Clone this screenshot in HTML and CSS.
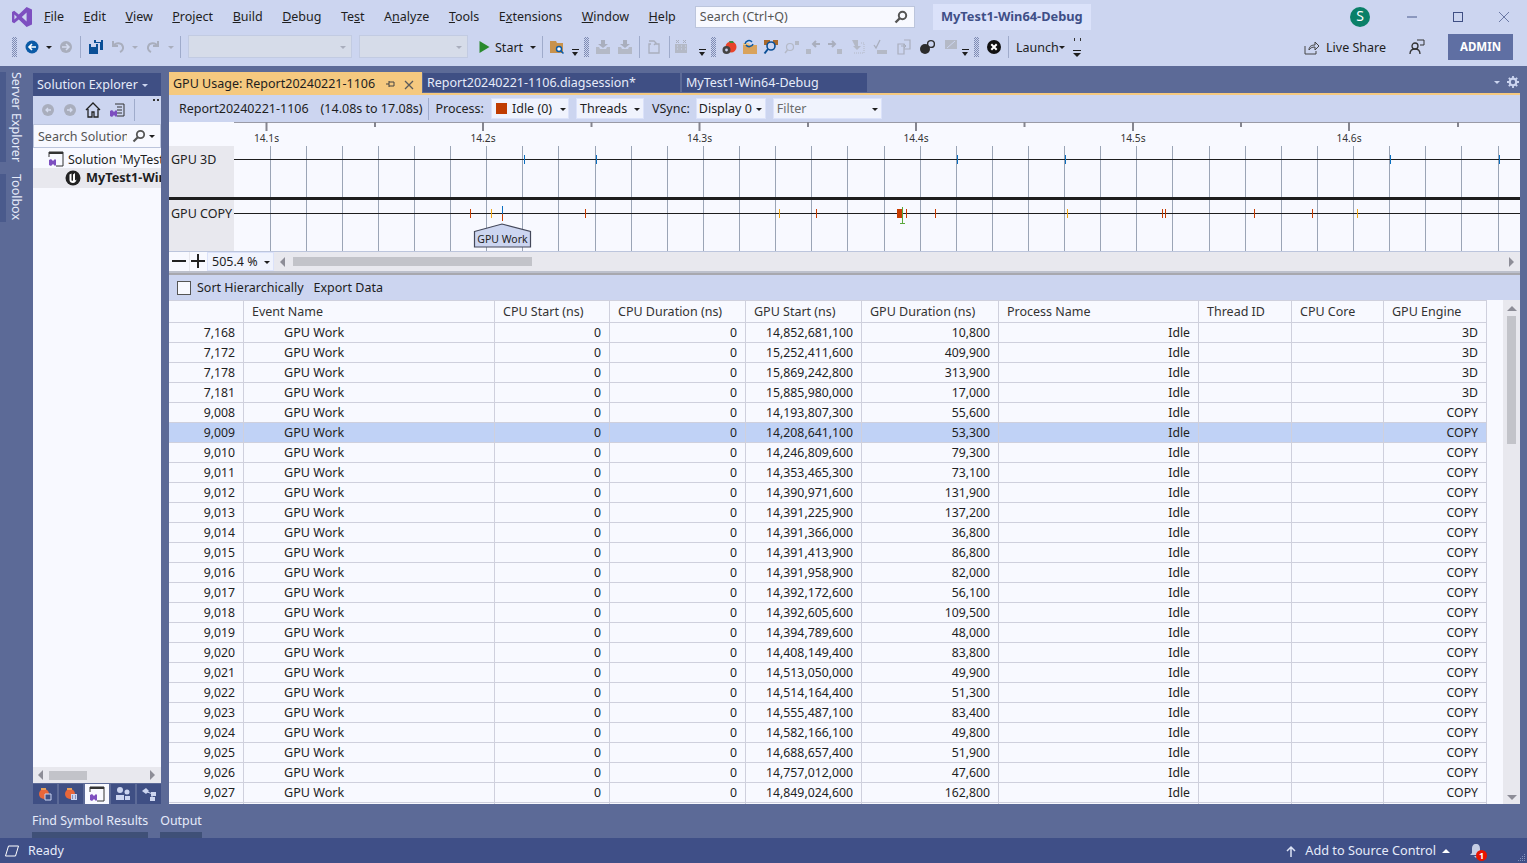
FILE: index.html
```html
<!DOCTYPE html>
<html lang="en">
<head>
<meta charset="utf-8">
<title>GPU Usage</title>
<link rel="stylesheet" href="styles.css">
</head>
<body>
<div class="app">
<header class="chrome">
  <div class="menubar">
    <svg class="logo" viewBox="0 0 22 22"><path fill="#7d4fc0" d="M15.6 1 21 3.4v15.2L15.6 21 7.8 13.6 3.2 17.2 1 16V6l2.2-1.2 4.6 3.6zM15.6 6.6 10.8 11l4.8 4.4zM3.4 8.4v5.2L6 11z"/></svg>
    <nav class="menu">
      <span><u>F</u>ile</span><span><u>E</u>dit</span><span><u>V</u>iew</span><span><u>P</u>roject</span><span><u>B</u>uild</span><span><u>D</u>ebug</span><span>Te<u>s</u>t</span><span>A<u>n</u>alyze</span><span><u>T</u>ools</span><span>E<u>x</u>tensions</span><span><u>W</u>indow</span><span><u>H</u>elp</span>
    </nav>
    <div class="quick"><span>Search (Ctrl+Q)</span>
      <svg class="i14" viewBox="0 0 14 14"><circle cx="8.5" cy="5.5" r="3.7" fill="none" stroke="#555" stroke-width="2"/><path d="M6 8 1.5 12.5" stroke="#555" stroke-width="2.4"/></svg>
    </div>
    <div class="solname">MyTest1-Win64-Debug</div>
    <div class="winctl">
      <span class="avatar">S</span>
      <svg class="wbtn" viewBox="0 0 12 12"><path d="M1 6h10" stroke="#4a5a8c"/></svg>
      <svg class="wbtn" viewBox="0 0 12 12"><rect x="1.5" y="1.5" width="9" height="9" fill="none" stroke="#3f4f84"/></svg>
      <svg class="wbtn" viewBox="0 0 12 12"><path d="M1 1l10 10M11 1 1 11" stroke="#6a78a4"/></svg>
    </div>
  </div>
  <div class="toolbar">
    <i class="grip g1"></i>
    <span class="ic m4"><svg class="i16" viewBox="0 0 16 16"><circle cx="8" cy="8" r="6.5" fill="#0a5aa6"/><path d="M12 8H6M8 5 5 8l3 3" stroke="#fff" stroke-width="1.6" fill="none"/></svg></span>
    <i class="caret"></i>
    <span class="ic"><svg class="i16" viewBox="0 0 16 16"><circle cx="8" cy="8" r="6" fill="#a9aebd"/><path d="M4 8h6M8 5l3 3-3 3" stroke="#d5dcf0" stroke-width="1.5" fill="none"/></svg></span>
    <i class="sep m3"></i>
    <span class="ic m4"><svg class="i16" viewBox="0 0 16 16"><path fill="#0a4f96" d="M1 5h9v10H1zM6 1h9v10h-3V4H6z"/><path fill="#ccd5f0" d="M3 5h5v3H3zM8 1h5v2H8z"/></svg></span>
    <span class="ic"><svg class="i16" viewBox="0 0 16 16"><path d="M3 2v5h5M3.5 7C6 3 12 3.500 13 8c.4 2.500-1 4-3 5" stroke="#a9aebd" stroke-width="2" fill="none"/></svg></span>
    <i class="caret off"></i>
    <span class="ic w24"><svg class="i16" viewBox="0 0 16 16"><path d="M13 2v5H8M12.500 7C10 3 4 3.500 3 8c-.4 2.500 1 4 3 5" stroke="#a9aebd" stroke-width="2" fill="none"/></svg></span>
    <i class="caret off"></i>
    <i class="sep m3"></i>
    <span class="combo c1"><i class="caret off"></i></span>
    <span class="combo c2"><i class="caret off"></i></span>
    <span class="ic m5"><svg class="i14" viewBox="0 0 14 14"><path fill="#2a8a2e" d="M2.500 1 12.500 7l-10 6z"/></svg></span>
    <span class="tbtext">Start</span>
    <i class="caret m3"></i>
    <i class="sep m3"></i>
    <span class="ic m3"><svg class="i16" viewBox="0 0 16 16"><path fill="#c8924c" d="M1 2h6l1 2h6v10H1z"/><circle cx="10" cy="10" r="2.500" fill="#fff" stroke="#0a5aa6" stroke-width="1.400"/><path d="M12 12l2.500 2.500" stroke="#0a5aa6" stroke-width="1.500"/></svg></span>
    <i class="drop m3"></i><i class="grip m3"></i>
    <span class="ic m3"><svg class="i16" viewBox="0 0 16 16"><use href="#dim-down"/></svg></span>
    <span class="ic"><svg class="i16" viewBox="0 0 16 16"><use href="#dim-down"/></svg></span>
    <i class="sep m3"></i>
    <span class="ic m3"><svg class="i16" viewBox="0 0 16 16"><path d="M5 5H3v9h10V5h-4M3 2h5l2 2-2 2" stroke="#a9aebd" stroke-width="1.300" fill="none"/></svg></span>
    <i class="sep m4"></i>
    <span class="ic"><svg class="i16" viewBox="0 0 16 16"><path d="M2 5h12v9H2z" fill="#b4b9c6"/><path d="M3 1l3 3M6 1 3 4M10 1l3 3M13 1l-3 3" stroke="#a9aebd"/><path d="M4 7h1M8 7h1M12 7h1M4 10h1M8 10h1M12 10h1" stroke="#ccd5f0"/></svg></span>
    <i class="drop m6"></i><i class="grip m3"></i>
    <span class="ic n m2"><svg class="i16" viewBox="0 0 16 16"><circle cx="10" cy="8" r="5.500" fill="#e8442a"/><path d="M8 2h4l1 2-4 0z" fill="#3a8a3a"/><circle cx="5.500" cy="11" r="4" fill="#444"/><circle cx="5.500" cy="11" r="1.400" fill="#ccd5f0"/></svg></span>
    <span class="ic n"><svg class="i16" viewBox="0 0 16 16"><path fill="#d9a35c" d="M1 6h14v9H1z"/><path fill="#e9c58c" d="M1 4h6l1 2H1z"/><path d="M3 5a4 4 0 0 1 7-2M11 5a4 4 0 0 1-7 1" stroke="#0a5aa6" stroke-width="1.500" fill="none"/></svg></span>
    <span class="ic n"><svg class="i16" viewBox="0 0 16 16"><path fill="#a8682a" d="M1 1h6v5H1zM10 1h5v5h-5z"/><circle cx="8" cy="7" r="4" fill="#ccd5f0" stroke="#0a4f96" stroke-width="1.600"/><path d="M5 10 1.500 14.500" stroke="#0a4f96" stroke-width="2"/></svg></span>
    <span class="ic n"><svg class="i16" viewBox="0 0 16 16"><circle cx="6" cy="8" r="3.500" fill="none" stroke="#b4b9c6" stroke-width="1.200"/><path d="M3.500 11 1 14" stroke="#b4b9c6" stroke-width="1.400"/><path d="M11 2h4v4h-4z" fill="#b4b9c6"/></svg></span>
    <span class="ic n"><svg class="i16" viewBox="0 0 16 16"><path d="M1 10h5v5H1z" fill="#b4b9c6"/><path d="M15 5H8M11 2 8 5l3 3" stroke="#a9aebd" stroke-width="2" fill="none"/></svg></span>
    <span class="ic t"><svg class="i16" viewBox="0 0 16 16"><path d="M10 10h5v5h-5z" fill="#b4b9c6"/><path d="M1 5h7M5 2l3 3-3 3" stroke="#a9aebd" stroke-width="2" fill="none"/></svg></span>
    <span class="ic t"><svg class="i16" viewBox="0 0 16 16"><path d="M2 1h6v6h3l-4 4-4-4h2z" fill="#b4b9c6"/><path d="M11 4h3v10H4" stroke="#b4b9c6" stroke-dasharray="1 1" fill="none"/></svg></span>
    <span class="ic t"><svg class="i16" viewBox="0 0 16 16"><path d="M1 6l2 3 4-8" stroke="#a9aebd" stroke-width="1.300" fill="none"/><path d="M4 11h10v4H4z" fill="#b4b9c6"/></svg></span>
    <span class="ic t"><svg class="i16" viewBox="0 0 16 16"><path d="M2 5h6v10H2zM8 1h6v9H8" stroke="#a9aebd" stroke-width="1.200" fill="none"/><path d="M5 7h5M8 5l2 2-2 2" stroke="#a9aebd" fill="none"/></svg></span>
    <span class="ic t"><svg class="i16" viewBox="0 0 16 16"><circle cx="6" cy="10" r="5" fill="#2c2c2c"/><circle cx="12" cy="5" r="3.400" fill="none" stroke="#2c2c2c" stroke-width="1.400"/></svg></span>
    <span class="ic t"><svg class="i16" viewBox="0 0 16 16"><path d="M3 1h12v9H3z" fill="#b4b9c6"/><path d="M5 9l8-7M1 13h14M5 11l3 4" stroke="#ccd5f0"/></svg></span>
    <i class="drop"></i><i class="grip m3"></i>
    <span class="ic m4"><svg class="i16" viewBox="0 0 16 16"><circle cx="8" cy="8" r="7" fill="#111"/><path d="M5.300 5.300l5.400 5.400M10.700 5.300l-5.400 5.400" stroke="#fff" stroke-width="2"/></svg></span>
    <i class="sep m3"></i>
    <span class="tbtext launch">Launch</span>
    <i class="caret s"></i>
    <span class="over"><i></i></span>
    <div class="share">
      <svg class="i16" viewBox="0 0 16 16"><path d="M1 7v8h11v-3" stroke="#444" fill="none"/><path d="M5 11c0-4 3-5 6-5V3l4 4-4 4V8C8 8 6 9 5 11z" stroke="#444" fill="none"/></svg>
      <span class="sharetxt">Live Share</span>
      <svg class="i16 fb" viewBox="0 0 16 16"><circle cx="6" cy="7" r="3" fill="none" stroke="#333" stroke-width="1.300"/><path d="M1 15c0-3 2-5 5-5s5 2 5 5" stroke="#333" stroke-width="1.300" fill="none"/><path d="M8 1h7v5h-4" stroke="#333" fill="none"/></svg>
      <span class="admin">ADMIN</span>
    </div>
  </div>
</header>

<main class="main">
  <aside class="rail">
    <div class="railitem r1"><b></b><span>Server Explorer</span></div>
    <div class="railitem r2"><b></b><span>Toolbox</span></div>
  </aside>

  <section class="explorer">
    <div class="ex-head">Solution Explorer <i class="caret pale"></i></div>
    <div class="ex-tools">
      <svg class="i14" viewBox="0 0 14 14"><circle cx="7" cy="7" r="6" fill="#a9aebd"/><path d="M10 7H5M7 5 5 7l2 2" stroke="#d5dcf0" stroke-width="1.300" fill="none"/></svg>
      <svg class="i14" viewBox="0 0 14 14"><circle cx="7" cy="7" r="6" fill="#a9aebd"/><path d="M4 7h5M7 5l2 2-2 2" stroke="#d5dcf0" stroke-width="1.300" fill="none"/></svg>
      <svg class="i16" viewBox="0 0 16 16"><path d="M1 8l7-7 7 7M3 7v8h4v-5h2v5h4V7" stroke="#222" stroke-width="1.300" fill="none"/></svg>
      <svg class="i16" viewBox="0 0 16 16"><path d="M6 2h9v12H8" stroke="#333" fill="none"/><path d="M8 5h5M8 8h5M8 11h5" stroke="#333"/><path d="M1 9l2-1 2 2 2-2 1 1v5l-1 1-2-2-2 2-2-1z" fill="#7d4fc0"/></svg>
      <i class="sep"></i>
      <span class="ex-over"></span>
    </div>
    <div class="ex-search"><span>Search Solution</span>
      <svg class="i14" viewBox="0 0 14 14"><circle cx="8.500" cy="5.500" r="3.700" fill="none" stroke="#555" stroke-width="1.800"/><path d="M6 8 1.500 12.500" stroke="#555" stroke-width="2.200"/></svg>
      <i class="caret"></i>
    </div>
    <div class="ex-tree">
      <div class="tree-row sol">
        <svg class="i16" viewBox="0 0 16 16"><path d="M1 6V1h14v14H8" stroke="#333" fill="none"/><path d="M1 2h14" stroke="#333" stroke-width="2"/><path d="M1 9l2-1 2 2 2-2 1 1v5l-1 1-2-2-2 2-2-1z" fill="#7d4fc0"/></svg>
        <span>Solution 'MyTest1-Win64-Debug'</span>
      </div>
      <div class="tree-row proj">
        <svg class="i16" viewBox="0 0 16 16"><circle cx="8" cy="8" r="7.500" fill="#222"/><path d="M4.500 4.500 6.500 3.500V10c0 1 1 1 1.500.5V4.500L10 3v7.500l1.500-1C11 11.500 10 13 8 13c-2 0-3.500-1-3.500-3z" fill="#fff"/></svg>
        <span>MyTest1-Win64-Debug</span>
      </div>
    </div>
    <div class="ex-hscroll"><i class="ar l"></i><b></b><i class="ar r"></i></div>
    <div class="ex-tabs">
      <span><svg class="i14" viewBox="0 0 14 14"><circle cx="6" cy="7" r="5" fill="#e8663a"/><path d="M3 1h5v2H3z" fill="#e8a05a"/><path d="M7 7h6v6H7z" fill="#3f4f84" stroke="#ccd5f0"/></svg></span>
      <span><svg class="i14" viewBox="0 0 14 14"><circle cx="6" cy="7" r="5" fill="#e8663a"/><path d="M3 1h5v2H3z" fill="#e8a05a"/><path d="M7 7h6v6H7z" fill="#ccd5f0"/><path d="M8 9h1M11 9h1M8 11h1M11 11h1" stroke="#3f4f84"/></svg></span>
      <span class="on"><svg class="i16" viewBox="0 0 16 16"><path d="M1 6V1h14v14H8" stroke="#333" fill="none"/><path d="M1 2h14" stroke="#333" stroke-width="2"/><path d="M1 9l2-1 2 2 2-2 1 1v5l-1 1-2-2-2 2-2-1z" fill="#7d4fc0"/></svg></span>
      <span><svg class="i16" viewBox="0 0 16 16"><circle cx="5" cy="4" r="3" fill="#ccd5f0"/><circle cx="12" cy="6" r="2.500" fill="#ccd5f0"/><path d="M1 14V9h8v5zM10 14v-4h5v4z" fill="#ccd5f0"/></svg></span>
      <span><svg class="i16" viewBox="0 0 16 16"><path d="M1 5l4-3 3 3-3 3z" fill="#ccd5f0"/><path d="M6 6l6 2M11 8v4" stroke="#ccd5f0"/><path d="M10 6h5v4h-5zM9 11h5v4H9z" fill="#ccd5f0"/></svg></span>
    </div>
  </section>

  <section class="doc">
    <div class="tabs">
      <div class="tab active"><span>GPU Usage: Report20240221-1106</span>
        <svg class="pin" viewBox="0 0 10 10"><path d="M0 5h3M3 2v6M3 3h5v4H3" stroke="#444" fill="none"/></svg>
        <svg class="close" viewBox="0 0 10 10"><path d="M1 1l8 8M9 1 1 9" stroke="#5a5a5a" stroke-width="1.300"/></svg>
      </div>
      <div class="tab t2">Report20240221-1106.diagsession*</div>
      <div class="tab t3">MyTest1-Win64-Debug</div>
      <div class="tab-tools"><i class="caret pale"></i>
        <svg class="i12" viewBox="0 0 12 12"><circle cx="6" cy="6" r="3.300" fill="none" stroke="#ccd5f0" stroke-width="2.200"/><path d="M6 0v2.500M6 9.500V12M0 6h2.500M9.500 6H12M1.800 1.800l1.700 1.700M8.500 8.500l1.700 1.700M10.200 1.800 8.500 3.500M3.500 8.500l-1.700 1.700" stroke="#ccd5f0" stroke-width="1.800"/></svg>
      </div>
    </div>
    <div class="doc-bar">
      <span class="rpt">Report20240221-1106</span>
      <span class="range">(14.08s to 17.08s)</span>
      <i class="sep"></i>
      <span class="lbl">Process:</span>
      <span class="pick p-proc"><b class="swatch"></b><span>Idle (0)</span><i class="caret"></i></span>
      <span class="pick p-thr"><span>Threads</span><i class="caret"></i></span>
      <span class="lbl vs">VSync:</span>
      <span class="pick p-dis"><span>Display 0</span><i class="caret"></i></span>
      <span class="pick p-fil"><span>Filter</span><i class="caret"></i></span>
    </div>

    <svg class="graph" viewBox="169 122 1351 129" width="1351" height="129">
      <rect x="169" y="122" width="1351" height="129" fill="#f8f9ff"/>
      <rect x="169" y="146" width="65" height="105" fill="#e8e8ee"/>
      <path d="M234 122.500H1520" stroke="#9a9aa6"/>
      <path d="M266.500 122v9M483 122v9M699.500 122v9M916 122v9M1133 122v9M1349 122v9" stroke="#85858f" stroke-width="2"/>
      <path d="M375 122v5M591.500 122v5M808 122v5M1024.500 122v5M1241 122v5M1458 122v5" stroke="#85858f" stroke-width="2"/>
      <g class="tick">
        <text x="266.500" y="142">14.1s</text><text x="483" y="142">14.2s</text><text x="699.500" y="142">14.3s</text><text x="916" y="142">14.4s</text><text x="1133" y="142">14.5s</text><text x="1349" y="142">14.6s</text>
      </g>
      <path stroke="#9ba5b6" d="M270.500 146V251M306.500 146V251M342.500 146V251M378.500 146V251M414.500 146V251M450.500 146V251M486.500 146V251M522.500 146V251M558.500 146V251M595.500 146V251M631.500 146V251M667.500 146V251M703.500 146V251M739.500 146V251M775.500 146V251M811.500 146V251M847.500 146V251M884.500 146V251M920.500 146V251M956.500 146V251M992.500 146V251M1028.500 146V251M1064.500 146V251M1100.500 146V251M1136.500 146V251M1172.500 146V251M1209.500 146V251M1245.500 146V251M1281.500 146V251M1317.500 146V251M1353.500 146V251M1389.500 146V251M1425.500 146V251M1461.500 146V251M1498.500 146V251"/>
      <path d="M234 159.500H1520M234 213.500H1520" stroke="#1e1e1e"/>
      <rect x="169" y="197" width="1351" height="3" fill="#1e1e1e"/>
      <path stroke="#0a6fc0" d="M524.500 155v9M596.500 155v9M957.500 155v9M1065.500 155v9M1390.500 155v9M1499.500 155v9"/>
      <path stroke="#c83c00" d="M470.500 209v9M585.500 209v9M816.500 209v9M906.500 209v9M935.500 209v9M1162.500 209v9M1165.500 209v9M1254.500 209v9M1312.500 209v9"/>
      <path stroke="#f0a818" d="M491.500 209v9M779.500 209v9M1067.500 209v9M1357.500 209v9"/>
      <path stroke="#0a6fc0" d="M502.500 206v8"/><path stroke="#c83c00" d="M502.500 214v7"/>
      <rect x="897" y="209" width="5" height="9" fill="#c83c00"/>
      <path stroke="#5aa83c" d="M902.500 207v16M900 223.500h5"/>
      <path d="M474.500 231.500 502 224l28.500 7.500v15.500h-56z" fill="#ccd5f0" stroke="#44485a" stroke-width="1.200"/>
      <text class="gw" x="502.500" y="243">GPU Work</text>
      <text class="lane" x="171" y="164">GPU 3D</text>
      <text class="lane" x="171" y="218">GPU COPY</text>
    </svg>

    <div class="zoombar">
      <span class="zb minus"><i></i></span>
      <span class="zb plus"><i></i><i></i></span>
      <span class="zsel"><span>505.4 %</span><i class="caret"></i></span>
      <div class="hs"><i class="ar l"></i><b></b><i class="ar r"></i></div>
    </div>
    <div class="split"></div>
    <div class="sortrow">
      <i class="chk"></i><span>Sort Hierarchically</span><span class="exp">Export Data</span>
    </div>
    <div class="gridwrap">
      <div class="gridclip">
      <table class="grid">
        <colgroup><col class="k0"><col class="k1"><col class="k2"><col class="k3"><col class="k4"><col class="k5"><col class="k6"><col class="k7"><col class="k8"><col class="k9"></colgroup>
        <thead><tr><th></th><th>Event Name</th><th>CPU Start (ns)</th><th>CPU Duration (ns)</th><th>GPU Start (ns)</th><th>GPU Duration (ns)</th><th>Process Name</th><th>Thread ID</th><th>CPU Core</th><th>GPU Engine</th></tr></thead>
        <tbody>
<tr><td>7,168</td><td class="ev">GPU Work</td><td>0</td><td>0</td><td>14,852,681,100</td><td>10,800</td><td>Idle</td><td></td><td></td><td>3D</td></tr>
<tr><td>7,172</td><td class="ev">GPU Work</td><td>0</td><td>0</td><td>15,252,411,600</td><td>409,900</td><td>Idle</td><td></td><td></td><td>3D</td></tr>
<tr><td>7,178</td><td class="ev">GPU Work</td><td>0</td><td>0</td><td>15,869,242,800</td><td>313,900</td><td>Idle</td><td></td><td></td><td>3D</td></tr>
<tr><td>7,181</td><td class="ev">GPU Work</td><td>0</td><td>0</td><td>15,885,980,000</td><td>17,000</td><td>Idle</td><td></td><td></td><td>3D</td></tr>
<tr><td>9,008</td><td class="ev">GPU Work</td><td>0</td><td>0</td><td>14,193,807,300</td><td>55,600</td><td>Idle</td><td></td><td></td><td>COPY</td></tr>
<tr class="sel"><td>9,009</td><td class="ev">GPU Work</td><td>0</td><td>0</td><td>14,208,641,100</td><td>53,300</td><td>Idle</td><td></td><td></td><td>COPY</td></tr>
<tr><td>9,010</td><td class="ev">GPU Work</td><td>0</td><td>0</td><td>14,246,809,600</td><td>79,300</td><td>Idle</td><td></td><td></td><td>COPY</td></tr>
<tr><td>9,011</td><td class="ev">GPU Work</td><td>0</td><td>0</td><td>14,353,465,300</td><td>73,100</td><td>Idle</td><td></td><td></td><td>COPY</td></tr>
<tr><td>9,012</td><td class="ev">GPU Work</td><td>0</td><td>0</td><td>14,390,971,600</td><td>131,900</td><td>Idle</td><td></td><td></td><td>COPY</td></tr>
<tr><td>9,013</td><td class="ev">GPU Work</td><td>0</td><td>0</td><td>14,391,225,900</td><td>137,200</td><td>Idle</td><td></td><td></td><td>COPY</td></tr>
<tr><td>9,014</td><td class="ev">GPU Work</td><td>0</td><td>0</td><td>14,391,366,000</td><td>36,800</td><td>Idle</td><td></td><td></td><td>COPY</td></tr>
<tr><td>9,015</td><td class="ev">GPU Work</td><td>0</td><td>0</td><td>14,391,413,900</td><td>86,800</td><td>Idle</td><td></td><td></td><td>COPY</td></tr>
<tr><td>9,016</td><td class="ev">GPU Work</td><td>0</td><td>0</td><td>14,391,958,900</td><td>82,000</td><td>Idle</td><td></td><td></td><td>COPY</td></tr>
<tr><td>9,017</td><td class="ev">GPU Work</td><td>0</td><td>0</td><td>14,392,172,600</td><td>56,100</td><td>Idle</td><td></td><td></td><td>COPY</td></tr>
<tr><td>9,018</td><td class="ev">GPU Work</td><td>0</td><td>0</td><td>14,392,605,600</td><td>109,500</td><td>Idle</td><td></td><td></td><td>COPY</td></tr>
<tr><td>9,019</td><td class="ev">GPU Work</td><td>0</td><td>0</td><td>14,394,789,600</td><td>48,000</td><td>Idle</td><td></td><td></td><td>COPY</td></tr>
<tr><td>9,020</td><td class="ev">GPU Work</td><td>0</td><td>0</td><td>14,408,149,400</td><td>83,800</td><td>Idle</td><td></td><td></td><td>COPY</td></tr>
<tr><td>9,021</td><td class="ev">GPU Work</td><td>0</td><td>0</td><td>14,513,050,000</td><td>49,900</td><td>Idle</td><td></td><td></td><td>COPY</td></tr>
<tr><td>9,022</td><td class="ev">GPU Work</td><td>0</td><td>0</td><td>14,514,164,400</td><td>51,300</td><td>Idle</td><td></td><td></td><td>COPY</td></tr>
<tr><td>9,023</td><td class="ev">GPU Work</td><td>0</td><td>0</td><td>14,555,487,100</td><td>83,400</td><td>Idle</td><td></td><td></td><td>COPY</td></tr>
<tr><td>9,024</td><td class="ev">GPU Work</td><td>0</td><td>0</td><td>14,582,166,100</td><td>49,800</td><td>Idle</td><td></td><td></td><td>COPY</td></tr>
<tr><td>9,025</td><td class="ev">GPU Work</td><td>0</td><td>0</td><td>14,688,657,400</td><td>51,900</td><td>Idle</td><td></td><td></td><td>COPY</td></tr>
<tr><td>9,026</td><td class="ev">GPU Work</td><td>0</td><td>0</td><td>14,757,012,000</td><td>47,600</td><td>Idle</td><td></td><td></td><td>COPY</td></tr>
<tr><td>9,027</td><td class="ev">GPU Work</td><td>0</td><td>0</td><td>14,849,024,600</td><td>162,800</td><td>Idle</td><td></td><td></td><td>COPY</td></tr>
<tr><td></td><td></td><td></td><td></td><td></td><td></td><td></td><td></td><td></td><td></td></tr>
        </tbody>
      </table>
      </div>
      <div class="gap"></div>
      <div class="vs-bar"><i class="ar u"></i><b></b><i class="ar d"></i></div>
    </div>
  </section>
</main>

<div class="dock"><span>Find Symbol Results</span><span>Output</span></div>
<footer class="status">
  <svg class="i16" viewBox="0 0 16 16"><path d="M4.500 3h10l-3 10h-10z" fill="none" stroke="#fff"/></svg>
  <span class="ready">Ready</span>
  <div class="st-right">
    <svg class="i12" viewBox="0 0 12 12"><path d="M6 12V2M2 6l4-4 4 4" stroke="#dde3f5" stroke-width="1.500" fill="none"/></svg>
    <span class="scm">Add to Source Control</span>
    <i class="caret up"></i>
    <span class="bell"><svg class="i16" viewBox="0 0 16 16"><path d="M8 1c3 0 4 2 4 5v4l2 2H2l2-2V6c0-3 1-5 4-5zM6 13h4l-2 2z" fill="#c5cde4"/></svg><b>1</b></span>
  </div>
  <svg class="corner" viewBox="0 0 8 8"><path d="M6 0h1v1H6zM4 2h1v1H4zM6 2h1v1H6zM2 4h1v1H2zM4 4h1v1H4zM6 4h1v1H6zM0 6h1v1H0zM2 6h1v1H2zM4 6h1v1H4zM6 6h1v1H6z" fill="#8593bd"/></svg>
</footer>
</div>
<svg class="defs" width="0" height="0"><symbol id="dim-down" viewBox="0 0 16 16"><path d="M6 1h4v4h3l-5 4-5-4h3z" fill="#a9aebd"/><path d="M1 8h3l1 2h6l1-2h3v7H1z" fill="#b4b9c6"/></symbol></svg>
</body>
</html>
```

FILE: styles.css
```css
* { box-sizing: border-box; }
html, body { margin: 0; padding: 0; height: 100%; overflow: hidden; }
body { font: 12.5px/1.2 "Noto Sans", "Open Sans", sans-serif; color: #1e1e1e; }
i, b { display: block; font-style: normal; }
svg { display: block; flex: none; }
.defs { position: absolute; }
.i12 { width: 12px; height: 12px; }
.i14 { width: 14px; height: 14px; }
.i16 { width: 16px; height: 16px; }

.app { width: 1527px; height: 863px; display: flex; flex-direction: column; background: #5c6a97; }
.chrome { background: #ccd5f0; height: 66px; flex: none; }

.menubar { height: 33px; display: flex; align-items: center; position: relative; }
.logo { width: 22px; height: 22px; margin-left: 11px; }
.menu { display: flex; gap: 19.5px; margin-left: 11px; }
.quick { margin-left: 19px; width: 220px; height: 22px; background: #f8f9ff; border: 1px solid #bcc5dc; display: flex; align-items: center; justify-content: space-between; padding: 0 6px 0 4px; color: #555; }
.solname { margin-left: 18px; width: 158px; height: 26px; background: #dbe2fa; color: #3f4f87; font-weight: 700; display: flex; align-items: center; justify-content: center; font-size: 12.8px; }
.winctl { margin-left: auto; display: flex; align-items: center; padding-right: 17px; }
.avatar { width: 20px; height: 20px; border-radius: 50%; background: #0a8068; color: #fff; display: flex; align-items: center; justify-content: center; font-size: 14px; }
.wbtn { width: 12px; height: 12px; margin-left: 34px; }
.avatar + .wbtn { margin-left: 36px; }

.toolbar { height: 27px; display: flex; align-items: center; padding-left: 12px; }
.grip { width: 5px; height: 20px; background-image: conic-gradient(#7e8bb3 25%, transparent 0 50%, #7e8bb3 0 75%, transparent 0); background-size: 2px 2px; flex: none; }
.ic { width: 22px; height: 22px; display: flex; align-items: center; justify-content: center; flex: none; }
.ic.w24 { width: 24px; }
.ic.n { width: 21px; }
.ic.t { width: 23px; }
.m2 { margin-left: 2px; } .m3 { margin-left: 3px; } .m4 { margin-left: 4px; } .m5 { margin-left: 5px; } .m6 { margin-left: 6px; }
.caret { width: 12px; height: 12px; flex: none; position: relative; }
.caret::after { content: ""; position: absolute; left: 3px; top: 5px; border: 3px solid transparent; border-top: 3px solid #1e1e1e; border-bottom: 0; }
.caret.off::after { border-top-color: #a9aebd; }
.caret.pale::after { border-top-color: #ccd5f0; }
.caret.s { width: 10px; }
.caret.s::after { left: 2px; }
.caret.up::after { border-top: 0; border-bottom: 4px solid #fff; border-left-width: 4px; border-right-width: 4px; top: 4px; left: 2px; }
.sep { width: 1px; height: 22px; background: #9fabcb; flex: none; }
.combo { height: 23px; background: #d6dce9; border: 1px solid #c2cbe2; display: flex; align-items: center; justify-content: flex-end; margin-left: 7px; flex: none; padding-right: 2px; }
.c1 { width: 164px; } .c2 { width: 109px; }
.tbtext { flex: none; width: 29px; padding-top: 2px; }
.tbtext.launch { margin-left: 7px; width: 41px; }
.drop { width: 10px; height: 8px; flex: none; margin-top: 13px; position: relative; }
.drop::before { content: ""; position: absolute; left: 1px; top: 0; width: 7px; height: 1px; background: #1e1e1e; }
.drop::after { content: ""; position: absolute; left: 1px; top: 3px; border: 3.5px solid transparent; border-top: 4px solid #1e1e1e; border-bottom: 0; }
.over { width: 10px; height: 22px; margin-left: 5px; position: relative; flex: none; }
.over::before { content: ""; position: absolute; left: 2px; top: 2px; width: 5px; height: 3px; border-left: 1px solid #333; border-right: 1px solid #333; }
.over i { position: absolute; left: 1px; bottom: 0; width: 8px; height: 8px; }
.over i::before { content: ""; position: absolute; left: 0; top: 0; width: 8px; height: 1px; background: #1e1e1e; }
.over i::after { content: ""; position: absolute; left: 0; top: 3px; border: 4px solid transparent; border-top: 4px solid #1e1e1e; border-bottom: 0; }
.share { margin-left: auto; display: flex; align-items: center; padding-right: 14px; }
.sharetxt { margin-left: 6px; padding-top: 2px; }
.fb { margin-left: 23px; }
.admin { margin-left: 23px; width: 65px; height: 26px; background: #5f6fa3; color: #fff; font-weight: 700; font-size: 11.5px; display: flex; align-items: center; justify-content: center; }

.main { flex: 1; display: flex; min-height: 0; }
.rail { width: 33px; flex: none; padding-top: 6px; display: flex; flex-direction: column; gap: 12px; }
.railitem { display: flex; }
.railitem b { width: 6px; background: #4a5a8c; }
.railitem span { writing-mode: vertical-rl; color: #e6ebfa; margin-left: 3px; white-space: nowrap; }
.r1 { height: 90px; }
.r2 { height: 48px; }

.explorer { width: 128px; flex: none; margin-top: 7px; display: flex; flex-direction: column; overflow: hidden; }
.ex-head { height: 23px; background: #3f4f84; color: #e6ebfa; display: flex; align-items: center; padding-left: 4px; white-space: nowrap; flex: none; }
.ex-head .caret { margin-left: 1px; }
.ex-tools { height: 28px; flex: none; background: #ccd5f0; display: flex; align-items: center; gap: 8px; padding-left: 8px; position: relative; }
.ex-tools .sep { margin-left: 1px; }
.ex-over { position: absolute; right: 2px; top: 3px; width: 6px; height: 2px; border-left: 2px solid #333; border-right: 2px solid #333; }
.ex-search { height: 24px; flex: none; background: #f8f9ff; border: 1px solid #bcc5dc; display: flex; align-items: center; padding-left: 4px; color: #555; white-space: nowrap; overflow: hidden; position: relative; }
.ex-search span { width: 89px; flex: none; overflow: hidden; }
.ex-search svg { margin-left: 5px; }
.ex-tree { flex: 1; background: #f8f9ff; padding-top: 2px; }
.tree-row { height: 20px; display: flex; align-items: center; white-space: nowrap; overflow: hidden; }
.sol { padding-left: 15px; gap: 4px; height: 18px; }
.proj { padding-left: 32px; gap: 5px; background: #e8e8ee; font-weight: 700; font-size: 12.7px; }
.ex-hscroll { height: 16px; flex: none; background: #e8e8ee; display: flex; align-items: center; padding: 0 6px 0 5px; }
.ex-hscroll b { width: 38px; height: 9px; background: #c2c3c9; margin-left: 6px; }
.ex-hscroll .r { margin-left: auto; }
.ar { width: 0; height: 0; border: 4px solid transparent; flex: none; }
.ar.l { border-left: 0; border-right: 5px solid #8d8d97; border-top-width: 5px; border-bottom-width: 5px; }
.ar.r { border-right: 0; border-left: 5px solid #8d8d97; border-top-width: 5px; border-bottom-width: 5px; }
.ex-tabs { height: 20px; flex: none; margin-top: 1px; display: flex; gap: 2px; }
.ex-tabs span { width: 24px; background: #3f4f84; display: flex; align-items: center; justify-content: center; }
.ex-tabs .on { background: #f8f9ff; }

.doc { width: 1351px; flex: none; margin-left: 8px; margin-top: 6px; display: flex; flex-direction: column; }
.tabs { height: 23px; flex: none; display: flex; border-bottom: 2px solid #f5c97f; align-items: flex-start; }
.tab { height: 19px; margin-top: 1px; background: #3f4f84; color: #e6ebfa; padding-left: 4px; display: flex; align-items: center; white-space: nowrap; flex: none; }
.tab.active { width: 253px; height: 21px; margin-top: 0; background: #f5c97f; color: #1e1e1e; padding-top: 2px; }
.pin { width: 10px; height: 10px; margin-left: 11px; }
.close { width: 10px; height: 10px; margin-left: 8px; margin-top: 3px; }
.t2 { width: 257px; margin-left: 1px; }
.t3 { width: 185px; margin-left: 2px; }
.tab-tools { margin-left: auto; display: flex; align-items: center; gap: 4px; padding: 4px 1px 0 0; }

.doc-bar { height: 27px; flex: none; background: #ccd5f0; display: flex; align-items: center; padding-left: 10px; white-space: nowrap; }
.range { margin-left: 12px; }
.doc-bar .sep { margin-left: 5px; }
.lbl { margin-left: 7px; }
.lbl.vs { margin-left: 8px; }
.pick { height: 21px; background: #f0f3fd; border: 1px solid #dbe2fa; display: flex; align-items: center; flex: none; padding-left: 3px; justify-content: space-between; margin-left: 7px; }
.p-proc { width: 78px; padding-left: 4px; gap: 5px; }
.p-proc span { flex: 1; }
.p-thr { width: 68px; }
.p-dis { width: 70px; margin-left: 6px; padding-left: 2px; }
.p-fil { width: 109px; color: #6b6b6b; }
.swatch { width: 11px; height: 11px; background: #c03c00; flex: none; }

.graph { flex: none; }
.tick text { font-size: 10.2px; text-anchor: middle; fill: #333; }
.lane { font-size: 12.5px; fill: #222; }
.gw { font-size: 10.5px; text-anchor: middle; fill: #222; }

.zoombar { height: 20px; flex: none; border-top: 1px solid #bcc5dc; background: #e8e8ee; display: flex; align-items: stretch; }
.zb { width: 20px; background: #f8f9ff; position: relative; flex: none; }
.zb i { position: absolute; background: #222; left: 3px; top: 8px; width: 14px; height: 2px; }
.plus { margin-left: 1px; width: 17px; }
.plus i { left: 1px; }
.plus i + i { left: 7px; top: 2px; width: 2px; height: 14px; }
.zsel { width: 67px; background: #f0f3fd; border: 1px solid #dbe2fa; display: flex; align-items: center; justify-content: space-between; padding-left: 4px; flex: none; }
.hs { flex: 1; display: flex; align-items: center; padding: 0 6px; }
.hs b { width: 239px; height: 9px; background: #c2c3c9; margin-left: 8px; }
.hs .r { margin-left: auto; }
.split { height: 4px; flex: none; background: linear-gradient(#bcc0cc 0 2px, #a8a8ae 2px); }
.sortrow { height: 25px; flex: none; background: #ccd5f0; display: flex; align-items: center; padding-left: 8px; }
.chk { width: 14px; height: 14px; background: #f8f9ff; border: 1px solid #555; margin-right: 6px; }
.exp { margin-left: 10px; }

.gridwrap { flex: 1; display: flex; min-height: 0; background: #f8f9ff; }
.gridclip { width: 1318px; height: 504px; overflow: hidden; flex: none; }
.grid { border-collapse: separate; border-spacing: 0; table-layout: fixed; width: 1318px; }
.k0 { width: 75px; } .k1 { width: 251px; } .k2 { width: 115px; } .k3 { width: 136px; } .k4 { width: 116px; } .k5 { width: 137px; } .k6 { width: 200px; } .k7 { width: 93px; } .k8 { width: 92px; } .k9 { width: 103px; }
.grid th, .grid td { border-right: 1px solid #cfd0dd; border-bottom: 1px solid #cfd0dd; padding: 0 8px; white-space: nowrap; overflow: hidden; }
.grid th { height: 23px; font-weight: 400; text-align: left; color: #333; border-top: 1px solid #cfd0dd; }
.grid td { height: 20px; text-align: right; color: #1e1e1e; font-size: 12.25px; padding-top: 2px; }
.grid td.ev { text-align: left; padding: 0 8px 0 40px; font-size: 12.6px; }
.sel td { background: #c0d2f6; }
.gap { width: 16px; flex: none; }
.vs-bar { width: 17px; flex: none; background: #e8e8ee; display: flex; flex-direction: column; align-items: center; padding: 6px 0 4px; }
.vs-bar b { width: 9px; height: 128px; background: #c2c3c9; margin-top: 5px; }
.ar.u { border-top: 0; border-bottom: 5px solid #8d8d97; border-left-width: 5px; border-right-width: 5px; }
.ar.d { border-bottom: 0; border-top: 5px solid #8d8d97; border-left-width: 5px; border-right-width: 5px; margin-top: auto; }

.dock { height: 34px; flex: none; display: flex; padding-left: 32px; gap: 12px; color: #e6ebfa; align-items: flex-end; font-size: 12.4px; }
.dock span { height: 28px; border-bottom: 6px solid #3f5077; padding-top: 4px; }
.status { height: 25px; flex: none; background: #3f4f87; color: #e6ebfa; display: flex; align-items: center; padding-left: 4px; position: relative; }
.ready { margin-left: 8px; }
.st-right { margin-left: auto; margin-right: 43px; display: flex; align-items: center; }
.scm { margin-left: 8px; font-size: 12.7px; }
.st-right .caret { margin-left: 4px; }
.bell { position: relative; margin-left: 16px; }
.bell b { position: absolute; left: 8px; top: 7px; width: 11px; height: 11px; border-radius: 50%; background: #e81400; color: #fff; font-size: 9px; line-height: 11px; text-align: center; font-weight: 700; }
.corner { position: absolute; right: 1px; bottom: 1px; width: 8px; height: 8px; }
```
